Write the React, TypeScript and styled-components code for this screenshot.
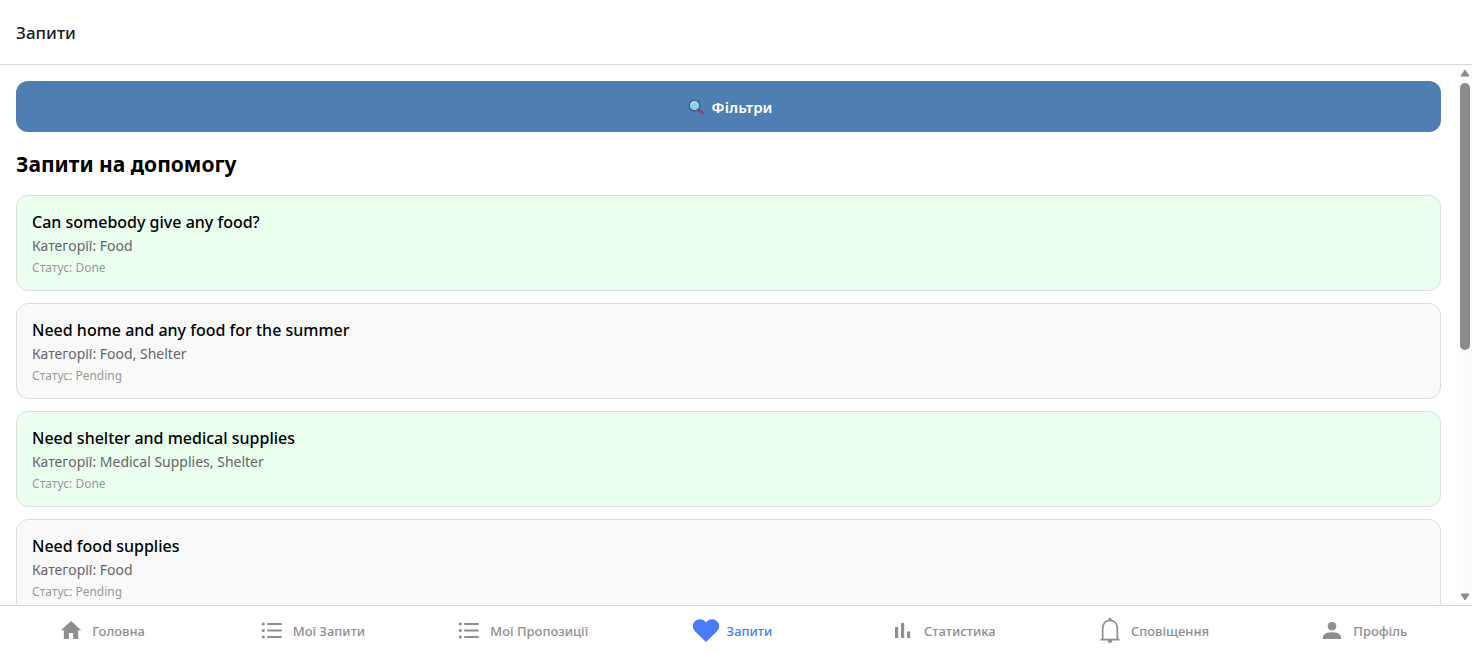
import React from "react";
import styled, { createGlobalStyle } from "styled-components";

const GlobalStyle = createGlobalStyle`
  * { box-sizing: border-box; }
  body {
    margin: 0;
    background: #fff;
    font-family: "Segoe UI", "Noto Sans", "Open Sans", sans-serif;
  }
`;

const Screen = styled.div`
  display: flex;
  flex-direction: column;
  height: 100vh;
`;

const Header = styled.header`
  display: flex;
  align-items: center;
  flex: none;
  height: 65px;
  padding: 2px 16px 0;
  border-bottom: 1px solid #d8d8d8;
`;

const HeaderTitle = styled.h1`
  margin: 0;
  font-size: 17px;
  line-height: 24px;
  font-weight: 500;
  color: #1c1c1e;
`;

const Body = styled.div`
  display: flex;
  flex: 1;
  min-height: 0;
`;

const Content = styled.main`
  flex: 1;
  min-width: 0;
  padding: 16px;
  overflow-y: auto;
  scrollbar-width: none;
`;

const FilterButton = styled.button`
  display: flex;
  align-items: center;
  justify-content: center;
  gap: 7px;
  width: 100%;
  height: 51px;
  padding: 0 0 0 2px;
  border: 0;
  border-radius: 12px;
  background: #4f7eb3;
  color: #fff;
  font: inherit;
  font-size: 15px;
  font-weight: 600;
  cursor: pointer;
`;

const SectionTitle = styled.h2`
  margin: 16px 0 15px;
  font-size: 21px;
  line-height: 32px;
  font-weight: 700;
  color: #000;
`;

const CardList = styled.ul`
  display: flex;
  flex-direction: column;
  gap: 12px;
  margin: 0;
  padding: 0;
  list-style: none;
`;

const Card = styled.li<{ $done: boolean }>`
  padding: 14px 15px 12px;
  border: 1px solid #ddd;
  border-radius: 12px;
  background: ${(p) => (p.$done ? "#eaffee" : "#f9f9f9")};
`;

const CardTitle = styled.h3`
  margin: 0;
  font-size: 16px;
  line-height: 24px;
  font-weight: 500;
  color: #000;
`;

const CardCategories = styled.p`
  margin: 0;
  font-size: 14px;
  line-height: 24px;
  color: #666;
`;

const CardStatus = styled.p`
  margin: 0;
  font-size: 12px;
  line-height: 20px;
  color: #999;
`;

const Scrollbar = styled.div`
  display: flex;
  flex-direction: column;
  align-items: center;
  gap: 6px;
  flex: none;
  width: 15px;
  padding: 4px 0;
  background: #fcfcfc;
`;

const Track = styled.div`
  flex: 1;
  width: 10px;
`;

const Thumb = styled.div`
  height: 53%;
  border-radius: 5px;
  background: #8b8b8b;
`;

const TabBar = styled.nav`
  display: flex;
  flex: none;
  height: 48px;
  border-top: 1px solid #d8d8d8;
  background: #fff;
`;

const Tab = styled.a<{ $active?: boolean }>`
  display: flex;
  align-items: center;
  justify-content: center;
  gap: 7px;
  flex: 1 1 0;
  padding: 3px 8px 0 0;
  color: ${(p) => (p.$active ? "#4a7cf9" : "#8e8e8f")};
  font-size: 13px;
  font-weight: 500;
  text-decoration: none;
  white-space: nowrap;
`;

const TabIcon = styled.svg`
  flex: none;
  width: 28px;
  height: 28px;
  fill: currentColor;
`;

const HomeIcon = () => (
  <TabIcon viewBox="0 0 28 28" aria-hidden="true">
    <path d="M14 4 L3.8 13.3 H6.8 V22 H11.8 V16 H16.2 V22 H21.2 V13.3 H24.2 Z" />
  </TabIcon>
);

const ListIcon = () => (
  <TabIcon viewBox="0 0 28 28" aria-hidden="true">
    <circle cx="5.3" cy="7" r="1.6" />
    <circle cx="5.3" cy="13.5" r="1.6" />
    <circle cx="5.3" cy="20" r="1.6" />
    <rect x="9" y="6" width="15" height="2" rx="1" />
    <rect x="9" y="12.5" width="15" height="2" rx="1" />
    <rect x="9" y="19" width="15" height="2" rx="1" />
  </TabIcon>
);

const HeartIcon = () => (
  <TabIcon viewBox="0 0 28 28" aria-hidden="true">
    <path d="M14 25 L3.2 14.4 C-0.2 11 .4 6.2 3.2 4 C6.5 1.4 11.4 1.9 14 5.4 C16.6 1.9 21.5 1.4 24.8 4 C27.6 6.2 28.2 11 24.8 14.4 Z" />
  </TabIcon>
);

const ChartIcon = () => (
  <TabIcon viewBox="0 0 28 28" aria-hidden="true">
    <rect x="6" y="10" width="3.2" height="11" />
    <rect x="12" y="6" width="3.2" height="15" />
    <rect x="18" y="14.5" width="3.2" height="6.5" />
  </TabIcon>
);

const BellIcon = () => (
  <TabIcon viewBox="0 0 28 28" aria-hidden="true">
    <path
      d="M4.5 22.7 H23.5 M6.7 22.5 V11.5 C6.7 6.5 9.7 3.3 14 3.3 C18.3 3.3 21.3 6.5 21.3 11.5 V22.5"
      fill="none"
      stroke="currentColor"
      strokeWidth="1.7"
    />
    <path d="M12.5 3.5 V2.2 A1.5 1.5 0 0 1 15.5 2.2 V3.5 Z" />
    <path d="M11.7 23 H16.3 A2.3 2.9 0 0 1 11.7 23 Z" />
  </TabIcon>
);

const PersonIcon = () => (
  <TabIcon viewBox="0 0 28 28" aria-hidden="true">
    <circle cx="14" cy="9.3" r="4.3" />
    <path d="M5 22 V19.8 C5 16.6 10.5 15.2 14 15.2 C17.5 15.2 23 16.6 23 19.8 V22 Z" />
  </TabIcon>
);

const SearchGlyph = styled.svg`
  width: 18px;
  height: 18px;
`;

const SearchIcon = () => (
  <SearchGlyph viewBox="0 0 18 18" aria-hidden="true">
    <path d="M11 11.5 L15.3 15" stroke="#874674" strokeWidth="3" strokeLinecap="round" />
    <circle cx="7.5" cy="7.5" r="5.4" fill="#83d3ec" stroke="#4b5382" strokeWidth="1.3" />
    <path d="M4.7 6.7 A3.2 3.2 0 0 1 7.7 4.2" fill="none" stroke="#a9e4f5" strokeWidth="1.2" strokeLinecap="round" />
  </SearchGlyph>
);

const ArrowGlyph = styled.svg`
  flex: none;
  width: 10px;
  height: 8px;
  fill: #8b8b8b;
`;

const requests = [
  { title: "Can somebody give any food?", categories: "Food", status: "Done" },
  { title: "Need home and any food for the summer", categories: "Food, Shelter", status: "Pending" },
  { title: "Need shelter and medical supplies", categories: "Medical Supplies, Shelter", status: "Done" },
  { title: "Need food supplies", categories: "Food", status: "Pending" },
];

const tabs = [
  { label: "Головна", Icon: HomeIcon },
  { label: "Мої Запити", Icon: ListIcon },
  { label: "Мої Пропозиції", Icon: ListIcon },
  { label: "Запити", Icon: HeartIcon, active: true },
  { label: "Статистика", Icon: ChartIcon },
  { label: "Сповіщення", Icon: BellIcon },
  { label: "Профіль", Icon: PersonIcon },
];

export default function App() {
  return (
    <Screen>
      <GlobalStyle />
      <Header>
        <HeaderTitle>Запити</HeaderTitle>
      </Header>
      <Body>
        <Content>
          <FilterButton type="button">
            <SearchIcon />
            Фільтри
          </FilterButton>
          <SectionTitle>Запити на допомогу</SectionTitle>
          <CardList>
            {requests.map((r) => (
              <Card key={r.title} $done={r.status === "Done"}>
                <CardTitle>{r.title}</CardTitle>
                <CardCategories>Категорії: {r.categories}</CardCategories>
                <CardStatus>Статус: {r.status}</CardStatus>
              </Card>
            ))}
          </CardList>
        </Content>
        <Scrollbar aria-hidden="true">
          <ArrowGlyph viewBox="0 0 10 8">
            <path d="M5 1 L9 7 H1 Z" stroke="#8b8b8b" strokeLinejoin="round" />
          </ArrowGlyph>
          <Track>
            <Thumb />
          </Track>
          <ArrowGlyph viewBox="0 0 10 8">
            <path d="M5 7 L9 1 H1 Z" stroke="#8b8b8b" strokeLinejoin="round" />
          </ArrowGlyph>
        </Scrollbar>
      </Body>
      <TabBar>
        {tabs.map(({ label, Icon, active }) => (
          <Tab key={label} href="#" $active={active} aria-current={active ? "page" : undefined}>
            <Icon />
            {label}
          </Tab>
        ))}
      </TabBar>
    </Screen>
  );
}
